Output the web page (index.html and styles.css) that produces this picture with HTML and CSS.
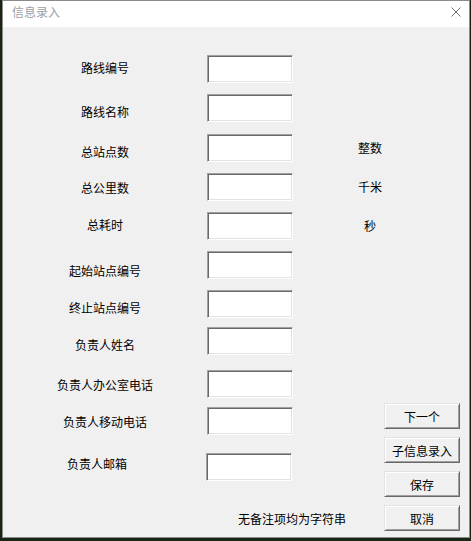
FILE: index.html
```html
<!DOCTYPE html>
<html lang="zh-CN">
<head>
    <meta charset="UTF-8">
    <title>信息录入</title>
    <link rel="stylesheet" href="styles.css">
</head>
<body>
    <div class="dialog">
        <div class="title-bar">
            <span class="title">信息录入</span>
            <svg class="close" width="10" height="10" viewBox="0 0 10 10">
                <path d="M0.5 0.5 L9.5 9.5 M9.5 0.5 L0.5 9.5" stroke="#6e6e6e" stroke-width="1" fill="none"/>
            </svg>
        </div>
        <div class="client">
            <form class="fields">
                <div class="row">
                    <label class="label hi">路线编号</label>
                    <input type="text" class="box">
                </div>
                <div class="row">
                    <label class="label lo">路线名称</label>
                    <input type="text" class="box">
                </div>
                <div class="row gap-md">
                    <label class="label lo">总站点数</label>
                    <input type="text" class="box">
                    <span class="unit">整数</span>
                </div>
                <div class="row">
                    <label class="label">总公里数</label>
                    <input type="text" class="box">
                    <span class="unit">千米</span>
                </div>
                <div class="row">
                    <label class="label hi">总耗时</label>
                    <input type="text" class="box">
                    <span class="unit">秒</span>
                </div>
                <div class="row">
                    <label class="label lower">起始站点编号</label>
                    <input type="text" class="box">
                </div>
                <div class="row">
                    <label class="label lo">终止站点编号</label>
                    <input type="text" class="box">
                </div>
                <div class="row gap-sm">
                    <label class="label lo">负责人姓名</label>
                    <input type="text" class="box">
                </div>
                <div class="row gap-lg">
                    <label class="label">负责人办公室电话</label>
                    <input type="text" class="box">
                </div>
                <div class="row gap-sm">
                    <label class="label">负责人移动电话</label>
                    <input type="text" class="box">
                </div>
                <div class="row gap-xl mail">
                    <label class="label top">负责人邮箱</label>
                    <input type="text" class="box">
                </div>
                <p class="hint">无备注项均为字符串</p>
            </form>
            <div class="actions">
                <button type="button" class="btn">下一个</button>
                <button type="button" class="btn">子信息录入</button>
                <button type="button" class="btn">保存</button>
                <button type="button" class="btn">取消</button>
            </div>
        </div>
    </div>
</body>
</html>
```

FILE: styles.css
```css
body {
    margin: 0;
    width: 471px;
    height: 541px;
    background-color: #1b2513;
    font-family: "Noto Sans CJK SC", "Liberation Sans", sans-serif;
    font-size: 12px;
    color: #000;
}
.dialog {
    width: 468px;
    height: 538px;
    margin-left: 2px;
    box-sizing: border-box;
    border: 1px solid #8a8a8a;
    background-color: #f0f0f0;
}
.title-bar {
    display: flex;
    align-items: center;
    justify-content: space-between;
    height: 26px;
    padding: 0 8px 5px 9px;
    box-sizing: border-box;
    background-color: #fff;
}
.title {
    color: #9aa0a8;
    line-height: 14px;
}
.close {
    display: block;
}
.client {
    display: flex;
    height: 510px;
}
.fields {
    width: 381px;
    margin: 0;
    padding: 28px 0 0 40px;
    box-sizing: border-box;
}
.row {
    display: flex;
    align-items: flex-start;
    height: 28px;
    margin-top: 11px;
}
.row:first-child {
    margin-top: 0;
}
/* 행 간격이 일정하지 않은 부분 */
.row.gap-sm {
    margin-top: 9px;
}
.row.gap-md {
    margin-top: 12px;
}
.row.gap-lg {
    margin-top: 15px;
}
.row.gap-xl {
    margin-top: 18px;
}
.label {
    width: 124px;
    margin-top: 8px;
    line-height: 14px;
    text-align: center;
    white-space: nowrap;
}
.label.hi {
    margin-top: 6px;
}
.label.lo {
    margin-top: 11px;
}
.label.lower {
    margin-top: 13px;
}
.label.top {
    margin-top: 4px;
}
.box {
    width: 86px;
    height: 28px;
    margin: 0 0 0 40px;
    padding: 0 3px;
    box-sizing: border-box;
    border-style: solid;
    border-width: 1px;
    border-color: #a0a0a0 #fff #fff #a0a0a0;
    box-shadow: inset 1px 1px #696969, inset -1px -1px #e3e3e3;
    background-color: #fff;
    font: inherit;
    outline: none;
}
.mail .label {
    padding-right: 16px;
    box-sizing: border-box;
}
.mail .box {
    margin-left: 39px;
}
.unit {
    width: 28px;
    margin: 7px 0 0 63px;
    line-height: 14px;
    text-align: center;
    white-space: nowrap;
}
.hint {
    margin: 31px 0 0 195px;
    line-height: 14px;
}
.actions {
    display: flex;
    flex-direction: column;
    justify-content: flex-end;
    gap: 8px;
    width: 76px;
    padding-bottom: 6px;
}
.btn {
    height: 26px;
    padding: 0;
    border-style: solid;
    border-width: 1px;
    border-color: #e3e3e3 #696969 #696969 #e3e3e3;
    box-shadow: inset 1px 1px #fff, inset -1px -1px #a0a0a0;
    background-color: #f0f0f0;
    font: inherit;
    color: #000;
    cursor: pointer;
}
```
